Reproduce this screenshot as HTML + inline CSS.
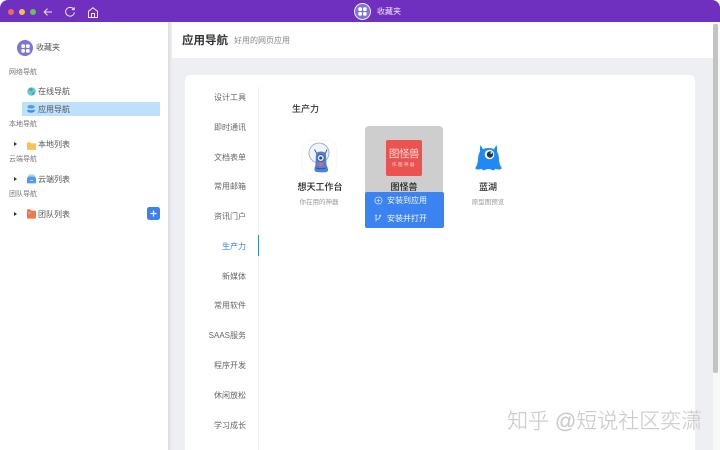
<!DOCTYPE html>
<html><head><meta charset="utf-8"><style>
*{box-sizing:border-box}
html,body{margin:0;padding:0;width:720px;height:450px;overflow:hidden;background:#fff;font-family:"Liberation Sans","Noto Sans CJK SC",sans-serif}
.a{position:absolute}
.t{position:absolute;white-space:nowrap;line-height:12px;color:#555}
.g{font-size:7px;color:#777;left:9px}
.n{font-size:8px;color:#555;left:38px}
.m{font-size:8px;color:#666;left:190px;width:56px;text-align:right}
.c{font-size:9px;color:#222;text-align:center;font-weight:500}
.s{font-size:6.5px;color:#999;text-align:center}
.arr{position:absolute;left:14px;width:0;height:0;border-left:3px solid #333;border-top:2.5px solid transparent;border-bottom:2.5px solid transparent}
</style></head><body>
<div class="a" style="left:0;top:0;width:720px;height:450px;background:#fff;overflow:hidden;filter:blur(.3px)">

<!-- content bg -->
<div class="a" style="left:168px;top:58px;width:545px;height:392px;background:#eeeff3"></div>
<!-- sidebar shadow -->
<div class="a" style="left:168px;top:22px;width:4px;height:428px;background:linear-gradient(90deg,#dcdcdf,#eeeff2)"></div>
<!-- card -->
<div class="a" style="left:185px;top:75px;width:510px;height:380px;background:#fff;border-radius:5px"></div>
<div class="a" style="left:258px;top:87px;width:1px;height:363px;background:#eeeeee"></div>
<div class="a" style="left:258px;top:235px;width:1px;height:21px;background:#3b82f0"></div>

<!-- scrollbar -->
<div class="a" style="left:713px;top:22px;width:7px;height:428px;background:#f8f8f9"></div>
<div class="a" style="left:713px;top:24px;width:5px;height:349px;background:#c3c3c3;border-radius:2px"></div>

<!-- title bar -->
<div class="a" style="left:0;top:0;width:720px;height:22px;background:#7030bf;border-radius:8px 8px 0 0"></div>
<div class="a" style="left:7.5px;top:9px;width:6px;height:6px;border-radius:50%;background:#ee6a5f"></div>
<div class="a" style="left:18.5px;top:9px;width:6px;height:6px;border-radius:50%;background:#f5bd4f"></div>
<div class="a" style="left:30px;top:9px;width:6px;height:6px;border-radius:50%;background:#61c454"></div>
<svg class="a" style="left:43px;top:7px" width="10" height="10" viewBox="0 0 10 10" fill="none" stroke="#efe6fb" stroke-width="1"><path d="M9 5H1.2M4.5 1.600L1.2 5l3.300 3.400"/></svg>
<svg class="a" style="left:64px;top:6px" width="12" height="12" viewBox="0 0 12 12" fill="none" stroke="#efe6fb" stroke-width="1"><path d="M9.900 3.600A4.400 4.400 0 1 0 10.400 6.400"/><path d="M7.800 3.600h2.400V1.200"/></svg>
<svg class="a" style="left:87px;top:6px" width="12" height="13" viewBox="0 0 12 13" fill="none" stroke="#efe6fb" stroke-width="1"><path d="M1.500 5.200L6 1.800l4.500 3.400v6.300h-9z"/><path d="M4.500 11.500V7.500h3v4"/></svg>
<!-- title icon -->
<div class="a" style="left:354px;top:3px;width:17px;height:17px;border-radius:50%;background:#7a74dc;border:1.5px solid #f0ecfa"></div>
<svg class="a" style="left:358px;top:7px" width="9" height="9" viewBox="0 0 9 9" fill="#fff"><rect x=".3" y=".3" width="3.700" height="3.700" rx="1.400"/><rect x="5" y=".3" width="3.700" height="3.700" rx="1.400"/><rect x=".3" y="5" width="3.700" height="3.700" rx="1.400"/><rect x="5" y="5" width="3.700" height="3.700" rx="1.400"/></svg>
<div class="t" style="left:377px;top:6px;font-size:8px;color:#f0e8fa">收藏夹</div>

<!-- sidebar -->
<div class="a" style="left:17px;top:40px;width:16px;height:16px;border-radius:50%;background:#7a74dc"></div>
<svg class="a" style="left:20.5px;top:43.5px" width="9" height="9" viewBox="0 0 9 9" fill="#fff"><rect x=".3" y=".3" width="3.700" height="3.700" rx="1.400"/><rect x="5" y=".3" width="3.700" height="3.700" rx="1.400"/><rect x=".3" y="5" width="3.700" height="3.700" rx="1.400"/><rect x="5" y="5" width="3.700" height="3.700" rx="1.400"/></svg>
<div class="t" style="left:36px;top:42px;font-size:8px;color:#555">收藏夹</div>

<div class="t g" style="top:67px">网络导航</div>
<svg class="a" style="left:27px;top:87px" width="9" height="9" viewBox="0 0 9 9"><circle cx="4.500" cy="4.500" r="4.300" fill="#5fcfc0"/><path d="M2 1.500L5 1 6 3 4 4.500 2.500 3.500zM5 6l2.500-1L7 7.500 5.500 8z" fill="#5b8fd8"/></svg>
<div class="t n" style="top:86px">在线导航</div>
<div class="a" style="left:22px;top:102px;width:138px;height:14px;background:#bfe0fb"></div>
<svg class="a" style="left:27px;top:104px" width="8" height="10" viewBox="0 0 8 10"><ellipse cx="4" cy="2.800" rx="3.600" ry="1.800" fill="#4d9cf0"/><path d="M.4 5.200C1.500 6.600 6.500 6.600 7.600 5.200V7.400C6.500 9.200 1.500 9.200 .4 7.400z" fill="#3c8cf0"/></svg>
<div class="t n" style="top:104px">应用导航</div>

<div class="t g" style="top:119px">本地导航</div>
<div class="arr" style="top:142px"></div>
<svg class="a" style="left:27px;top:142px" width="9" height="8" viewBox="0 0 9 8"><path d="M0 1a.7.7 0 0 1 .7-.7h2.600L4.200 1.400h4.200a.6.6 0 0 1 .6.6v5.300a.6.6 0 0 1-.6.6H.7A.7.7 0 0 1 0 7.300z" fill="#f8c44f"/></svg>
<div class="t n" style="top:139px">本地列表</div>

<div class="t g" style="top:154px">云端导航</div>
<div class="arr" style="top:177px"></div>
<svg class="a" style="left:27px;top:174px" width="9" height="10" viewBox="0 0 9 10"><path d="M1.500 1.200Q1.700.4 2.500.4h4q.8 0 1 .8L8 3H1z" fill="#a8d2f8"/><path d="M0 4.200L1 2.600h7L9 4.200V8.600q0 .8-.8.8H.8Q0 9.400 0 8.600z" fill="#4f9df0"/><rect x="3" y="6" width="3" height=".8" fill="#d6e8fb"/></svg>
<div class="t n" style="top:174px">云端列表</div>

<div class="t g" style="top:189px">团队导航</div>
<div class="arr" style="top:212px"></div>
<svg class="a" style="left:27px;top:209px" width="9" height="10" viewBox="0 0 9 10"><path d="M0 1a.8.8 0 0 1 .8-.8h2.400L4.200 1.600h4a.8.8 0 0 1 .8.8v6.400a.8.8 0 0 1-.8.8H.8A.8.8 0 0 1 0 8.800z" fill="#ee7a4c"/><rect x="1.500" y="3.500" width="2" height="1" fill="#f9c9b4"/></svg>
<div class="t n" style="top:209px">团队列表</div>
<div class="a" style="left:147px;top:207px;width:13px;height:13px;background:#3b82f0;border-radius:2.500px"></div>
<svg class="a" style="left:149px;top:209px" width="9" height="9" viewBox="0 0 9 9" stroke="#fff" stroke-width="1.200"><path d="M4.500 1.500v6M1.500 4.500h6"/></svg>

<!-- content header -->
<div class="t" style="left:182px;top:34px;font-size:11.500px;line-height:14px;color:#333;font-weight:700">应用导航</div>
<div class="t" style="left:234px;top:35px;font-size:8px;color:#888">好用的网页应用</div>

<!-- menu -->
<div class="t m" style="top:92px">设计工具</div>
<div class="t m" style="top:122px">即时通讯</div>
<div class="t m" style="top:152px">文档表单</div>
<div class="t m" style="top:181px">常用邮箱</div>
<div class="t m" style="top:211px">资讯门户</div>
<div class="t m" style="top:241px;color:#3b82f0">生产力</div>
<div class="t m" style="top:271px">新媒体</div>
<div class="t m" style="top:300px">常用软件</div>
<div class="t m" style="top:330px">SAAS服务</div>
<div class="t m" style="top:360px">程序开发</div>
<div class="t m" style="top:390px">休闲放松</div>
<div class="t m" style="top:420px">学习成长</div>

<div class="t" style="left:292px;top:103px;font-size:9px;color:#333;font-weight:500">生产力</div>

<!-- item 1 -->
<div class="a" style="left:303px;top:141px;width:33px;height:33px;background:#fff;border-radius:8px;box-shadow:0 0 3px #eee"></div>
<svg class="a" style="left:306px;top:141px" width="28" height="33" viewBox="0 0 28 33">
<circle cx="13" cy="12" r="10" fill="#f1f5fa" stroke="#9cb2d4" stroke-width="1"/>
<path d="M10 12Q15 9 20 12L20.500 24q1 2 1.500 4 .5 3-2.500 3.200-5 .5-9-.2Q8 30.500 8.500 27q1-2 1-4z" fill="#4f81d8"/>
<path d="M10.500 12L8.500 8.500M19.500 12l1.500-3.500" stroke="#3d5f9f" stroke-width="1" fill="none"/>
<circle cx="14.700" cy="17" r="3.500" fill="#d9e3ee" stroke="#34507f" stroke-width=".8"/><circle cx="14.700" cy="17" r="1.500" fill="#334466"/>
<rect x="12.500" y="21" width="4" height="4" fill="#d96a6a"/>
<path d="M10 27q5 1.500 10 0" stroke="#3659a3" stroke-width="1" fill="none"/>
</svg>
<div class="t c" style="left:290px;top:181px;width:60px">想天工作台</div>
<div class="t s" style="left:290px;top:197px;width:58px">你在用的神器</div>

<!-- item 2 -->
<div class="a" style="left:365px;top:126px;width:78px;height:70px;background:#cecece;border-radius:4px 4px 0 0"></div>
<div class="a" style="left:386px;top:140px;width:36px;height:36px;background:#ea5350;border-radius:2px"></div>
<div class="t" style="left:386px;top:147px;width:36px;text-align:center;font-size:10.500px;line-height:14px;color:#fbd6d4;letter-spacing:-.4px">图怪兽</div>
<div class="t" style="left:386px;top:162px;width:36px;text-align:center;font-size:4.500px;line-height:6px;color:#fbd6d4;letter-spacing:1.500px">作图神器</div>
<div class="t c" style="left:374px;top:181px;width:60px">图怪兽</div>
<div class="a" style="left:365px;top:192px;width:79px;height:36px;background:#3c83f2;border-radius:2px"></div>
<svg class="a" style="left:374px;top:196px" width="9" height="9" viewBox="0 0 9 9" fill="none" stroke="#dbe8fd" stroke-width=".8"><circle cx="4.500" cy="4.500" r="3.500"/><path d="M4.500 2.800v3.400M2.800 4.500h3.400"/></svg>
<div class="t" style="left:387px;top:195px;font-size:8px;color:#f2f6fe">安装到应用</div>
<svg class="a" style="left:374px;top:214px" width="9" height="9" viewBox="0 0 9 9" fill="none" stroke="#dbe8fd" stroke-width=".8"><path d="M2 1.500v6M2 5.500q3.500 0 4-3"/><circle cx="6.200" cy="1.800" r=".7"/><circle cx="2" cy="1.500" r=".5"/></svg>
<div class="t" style="left:387px;top:213px;font-size:8px;color:#f2f6fe">安装并打开</div>

<!-- item 3 -->
<svg class="a" style="left:475px;top:144px" width="27" height="29" viewBox="0 0 27 29">
<path d="M5.500 1L8 5.200Q13.500 2.800 19 5.200L21.500 1Q22.500 4 22 7.500 24 11 24 16q.5 5 2.500 7.500.5 2-2 2-2.500 0-4-.8-1.500 2.300-3.500 1.300-1.500-1-3.500-1-2 0-3.500 1-2 1-3.500-1.300-1.500.8-4 .8-2.500 0-2-2Q2.500 21 3 16 3 11 5 7.500 4.500 4 5.500 1z" fill="#1f8af5"/>
<circle cx="14.500" cy="10.500" r="4.800" fill="#fff"/><circle cx="15" cy="10.500" r="3.200" fill="#263a58"/><circle cx="16.300" cy="9" r=".9" fill="#fff"/>
</svg>
<div class="t c" style="left:458px;top:181px;width:60px">蓝湖</div>
<div class="t s" style="left:458px;top:197px;width:60px">原型图预览</div>

<!-- watermark -->
<div class="t" style="left:507px;top:411px;font-size:21px;line-height:22px;color:#cbcbcb;text-shadow:.5px .5px 0 #ebebeb;font-weight:300">知乎 @短说社区奕潇</div>
</div>
</body></html>
